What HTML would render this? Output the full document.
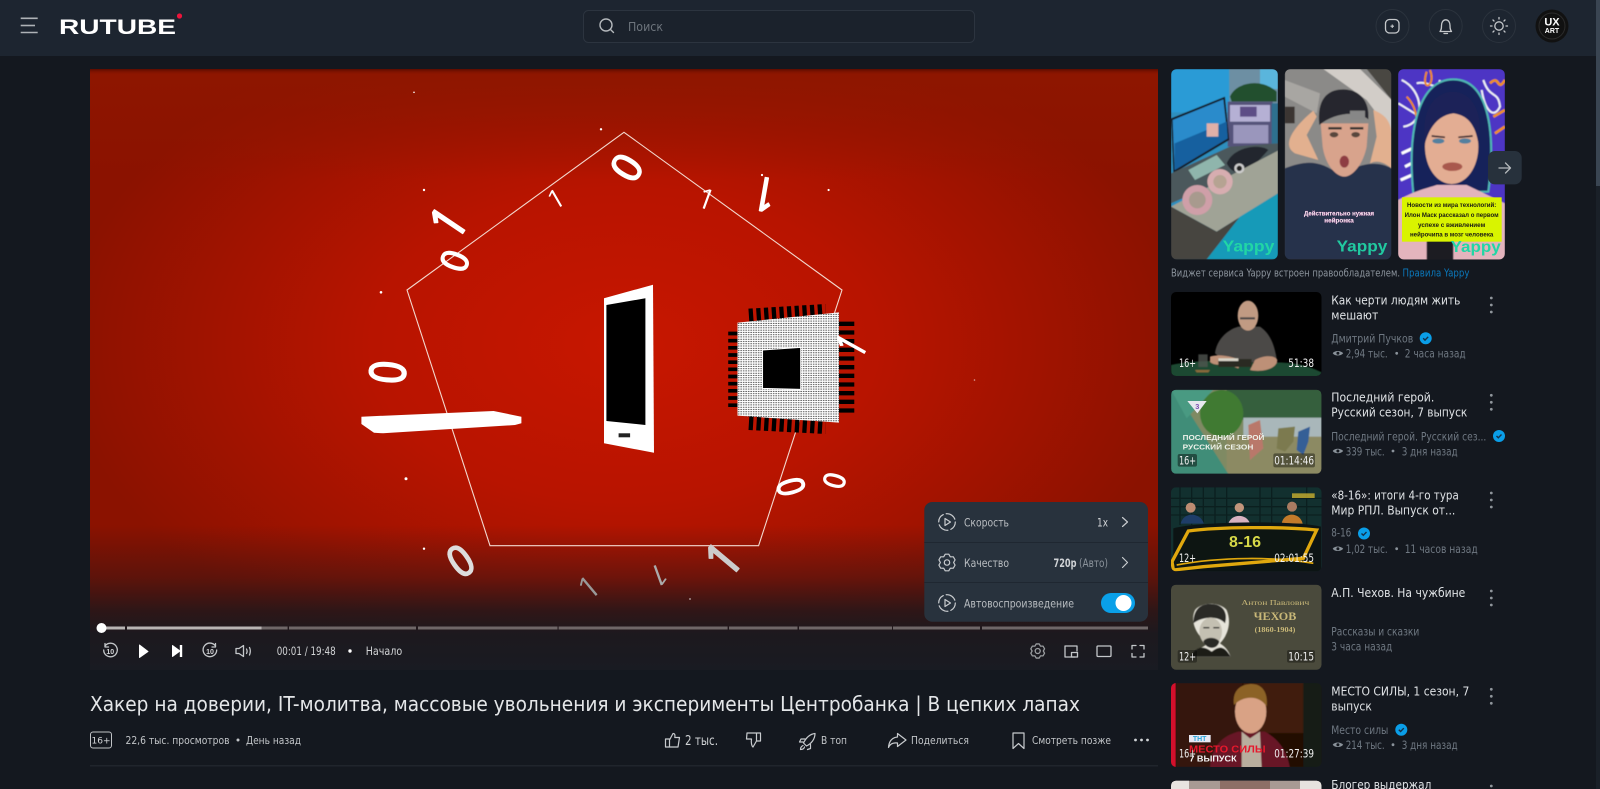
<!DOCTYPE html>
<html lang="ru"><head><meta charset="utf-8"><title>RUTUBE</title>
<style>
html,body{margin:0;padding:0;background:#14181f;width:1600px;height:789px;overflow:hidden}
svg.page{position:absolute;left:0;top:0;display:block}
text{font-family:"DejaVu Sans","Liberation Sans",sans-serif}
.img text,text.lib{font-family:"Liberation Sans","DejaVu Sans",sans-serif}
.img text.srf{font-family:"Liberation Serif",serif}
.ti{font-size:12.5px;fill:#dfe2e5}
.ch{font-size:11.500px;fill:#6f7882}
.lb{font-size:11.500px;fill:#f0f0f0}
.ic{fill:none;stroke:#c4c7ca;stroke-width:1.3;stroke-linecap:round;stroke-linejoin:round}
.ica{fill:none;stroke:#c8cbce;stroke-width:1.2;stroke-linecap:round;stroke-linejoin:round}
.wd text{font-family:"Noto Sans CJK JP","Liberation Sans",sans-serif;fill:#fff}
.wd .o{stroke:#fff;stroke-width:3;font-weight:400}
.wd text.n{font-family:"NanumGothic","WenQuanYi Zen Hei",sans-serif}
</style></head><body>
<svg class="page" width="1600" height="789" viewBox="0 0 1600 789" xmlns="http://www.w3.org/2000/svg">
<defs>
<radialGradient id="vg" gradientUnits="userSpaceOnUse" cx="624" cy="345" r="560" gradientTransform="translate(624 345) scale(1 .62) translate(-624 -345)">
<stop offset="0" stop-color="#c71600"/><stop offset=".45" stop-color="#b81400"/><stop offset="1" stop-color="#8b1200"/></radialGradient>
<linearGradient id="vb" x1="0" y1="0" x2="0" y2="1"><stop offset="0" stop-color="#19151a" stop-opacity="0"/><stop offset=".36" stop-color="#19151a" stop-opacity=".4"/><stop offset=".59" stop-color="#19171c" stop-opacity=".82"/><stop offset=".75" stop-color="#19191f" stop-opacity=".97"/><stop offset="1" stop-color="#191b22"/></linearGradient>
<linearGradient id="vt" x1="0" y1="0" x2="0" y2="1"><stop offset="0" stop-color="#5a0c00"/><stop offset="1" stop-color="#8c1500" stop-opacity="0"/></linearGradient>
<linearGradient id="vtop" x1="0" y1="0" x2="0" y2="1"><stop offset="0" stop-color="#8e1600"/><stop offset="1" stop-color="#8e1600" stop-opacity="0"/></linearGradient>
<pattern id="cpu" width="7" height="6.800" patternUnits="userSpaceOnUse"><rect x="1" y="2.500" width="4.500" height="2.200" fill="#222"/></pattern>
<clipPath id="c1"><rect x="1171" y="69" width="107" height="190.500" rx="6"/></clipPath>
<clipPath id="c2"><rect x="1284.700" y="69" width="106.600" height="190.500" rx="6"/></clipPath>
<clipPath id="c3"><rect x="1398" y="69" width="107" height="190.500" rx="6"/></clipPath>
<clipPath id="t1"><rect x="1171" y="292" width="150.500" height="84" rx="5"/></clipPath>
<clipPath id="t2"><rect x="1171" y="389.700" width="150.500" height="84" rx="5"/></clipPath>
<clipPath id="t3"><rect x="1171" y="487.300" width="150.500" height="84" rx="5"/></clipPath>
<clipPath id="t4"><rect x="1171" y="584.700" width="150.500" height="85" rx="5"/></clipPath>
<clipPath id="t5"><rect x="1171" y="683" width="150.500" height="84" rx="5"/></clipPath>
<clipPath id="t6"><rect x="1171" y="780.700" width="150.500" height="84" rx="5"/></clipPath>
<filter id="b1" x="-5%" y="-5%" width="110%" height="110%"><feGaussianBlur stdDeviation="1.500"/></filter>
<g id="eye"><path d="M0 3.500C2 .5 8 .5 10.500 3.500 8 6.500 2 6.500 0 3.500Z" fill="#8a929a"/><circle cx="5.200" cy="3.500" r="1.500" fill="#14181f"/></g>
<g id="chk"><circle r="6" fill="#0a9ee8"/><path d="M-2.500 0 -.7 1.800 2.500-1.500" fill="none" stroke="#14304a" stroke-width="1.400"/></g>
<g id="mn" fill="#8f959b"><circle cy="-7" r="1.400"/><circle r="1.400"/><circle cy="7" r="1.400"/></g>
<path id="gear" d="M-1.770 -8.310L1.770 -8.310 3.300 -5.720 6.320 -5.690 8.080 -2.630 6.600 0 8.080 2.630 6.320 5.690 3.300 5.720 1.770 8.310 -1.770 8.310 -3.300 5.720 -6.320 5.690 -8.080 2.630 -6.600 0 -8.080 -2.630 -6.320 -5.690 -3.300 -5.720Z"/>
</defs>

<rect width="1600" height="789" fill="#14181f"/>

<!-- header -->
<rect width="1596" height="56" fill="#1d2530"/>
<rect x="1596" width="4" height="789" fill="#1a2028"/>
<rect x="1596" width="4" height="186" fill="#3a4552"/>
<g stroke="#aeb2b6" stroke-width="1.600"><path d="M20.700 18.300H37.700"/><path d="M20.700 25.500H35"/><path d="M20.700 32.500H37.700"/></g>
<text class="lib" x="59" y="34" font-size="21" font-weight="700" fill="#fff" textLength="117" lengthAdjust="spacingAndGlyphs">RUTUBE</text>
<circle cx="179.500" cy="16" r="2.600" fill="#ed143b"/>
<rect x="583.500" y="10.500" width="391" height="32" rx="5" fill="#1b222c" stroke="#2c343f"/>
<circle cx="606" cy="25" r="6" fill="none" stroke="#b4b8bc" stroke-width="1.400"/><path d="M610.500 29.500 613.500 32.500" stroke="#b4b8bc" stroke-width="1.400" stroke-linecap="round"/>
<text x="628" y="31" font-size="12.500" fill="#6d747c" textLength="35" lengthAdjust="spacingAndGlyphs">Поиск</text>
<g fill="none" stroke="#2b333d"><circle cx="1392.500" cy="26" r="16.500"/><circle cx="1445.700" cy="26" r="16.500"/><circle cx="1499" cy="26" r="16.500"/></g>
<rect x="1385.500" y="19.500" width="13.500" height="13.500" rx="4" class="ic"/><path d="M1390.500 26.200H1394M1392.250 24.500V28" stroke="#c4c7ca" stroke-width="1.100"/>
<path class="ic" d="M1440 31.500H1451.500C1450 29.500 1450 28 1450 25.500 1450 22.500 1448.500 19.800 1445.700 19.800 1443 19.800 1441.500 22.500 1441.500 25.500 1441.500 28 1441.500 29.500 1440 31.500ZM1444 33.500H1447.500"/>
<circle cx="1499" cy="26" r="4.200" class="ic"/><path class="ic" d="M1499 17.500V19M1499 33V34.500M1490.500 26H1492M1506 26H1507.500M1493 20 1494 21M1504 31 1505 32M1505 20 1504 21M1494 31 1493 32"/>
<circle cx="1552" cy="26" r="16.500" fill="#111"/><circle cx="1552" cy="26" r="13" fill="none" stroke="#2b2b2b"/>
<text class="lib" x="1552" y="25.500" font-size="11" font-weight="700" fill="#fff" text-anchor="middle">UX</text>
<text class="lib" x="1552" y="33" font-size="7" font-weight="700" fill="#fff" text-anchor="middle">ART</text>

<!-- video -->
<rect x="90" y="69" width="1068" height="601" fill="url(#vg)"/>
<rect x="90" y="69" width="1068" height="110" fill="url(#vtop)"/>
<rect x="90" y="69" width="1068" height="6" fill="url(#vt)"/>
<rect x="90" y="525" width="1068" height="145" fill="url(#vb)"/>
<polygon points="624,132.300 842,290 758.600,545.700 490,545.700 407,290" fill="none" stroke="#f3d9cf" stroke-width="1.100"/>
<!-- phone -->
<polygon points="604,298.300 653,284.700 654,452.700 604,443.300" fill="#fff"/>
<polygon points="606.400,305 645.400,298.300 645.400,425 606.400,421" fill="#000"/>
<rect x="618.600" y="433.300" width="11.500" height="4" fill="#222"/>
<!-- tablet -->
<polygon points="361.400,416.700 493.600,411 521.400,416.700 521.400,423.300 515,425 383,433.300 374,432.700 361.400,424" fill="#fff"/>
<!-- chip -->
<g transform="translate(340 270) scale(.35714 .33333)">
<g fill="none" stroke="#000">
<path d="M1145 138 1360 124" stroke-width="44" stroke-dasharray="12 9.500"/>
<path d="M1145 458 1360 470" stroke-width="44" stroke-dasharray="12 9.500"/>
<path d="M1100 185V418" stroke-width="26" stroke-dasharray="11 10.500"/>
<path d="M1418 155V430" stroke-width="44" stroke-dasharray="13 13"/>
</g>
<polygon points="1113,158 1397,127 1397,458 1113,437" fill="#fff"/>
<polygon points="1113,158 1397,127 1397,458 1113,437" fill="url(#cpu)"/>
<polygon points="1183,240 1290,232 1290,358 1183,355" fill="#000" stroke="#fff" stroke-width="3"/>
</g>
<!-- digits -->
<g class="wd" font-size="100" text-anchor="middle">
<text class="o" y="35" transform="translate(627 167.700) rotate(-58) scale(.42 .42)">0</text>
<text class="n" y="35" transform="translate(556 199.300) rotate(-30) scale(.3 .25)">1</text>
<text class="n" y="35" transform="translate(706 199.300) rotate(20) scale(.32 .27)">1</text>
<text class="n" y="35" font-weight="700" transform="translate(765 193.300) rotate(190) scale(.42 .46)">1</text>
<text class="n" y="35" font-weight="700" transform="translate(449 223.300) rotate(-56) scale(.48 .5)">1</text>
<text class="o" y="35" transform="translate(455 261) rotate(-70) scale(.36 .38)">0</text>
<text class="o" y="35" transform="translate(388 372.300) rotate(-85) scale(.42 .5)">0</text>
<text class="n" y="35" font-weight="700" transform="translate(852 346) rotate(-61) scale(.32 .42)">1</text>
<text class="o" y="35" transform="translate(790.700 486.700) rotate(75) scale(.32 .38)">0</text>
<text class="o" y="35" transform="translate(834.600 480.700) rotate(-75) scale(.28 .3)">0</text>
<text class="o" y="35" transform="translate(460.700 561) rotate(-35) scale(.4 .44)" style="fill:#ddd;stroke:#ddd">0</text>
<text class="n" y="35" font-weight="700" transform="translate(724 560) rotate(-50) scale(.5 .5)" style="fill:#ccc">1</text>
<text class="n" y="35" transform="translate(589 587.700) rotate(-40) scale(.34 .3)" style="fill:#999">1</text>
<text class="n" y="35" transform="translate(659 574.300) rotate(160) scale(.34 .28)" style="fill:#aaa">1</text>
</g>
<g fill="#fff"><circle cx="414" cy="92.300" r=".8"/><circle cx="601" cy="129.300" r="1.200"/><circle cx="424" cy="190" r="1.200"/><circle cx="762" cy="175" r="1.100"/><circle cx="828.600" cy="190" r="1.100"/><circle cx="381" cy="292.300" r="1.300"/><circle cx="406" cy="478.700" r="1.500"/><circle cx="424" cy="548.700" r="1.200"/><circle cx="690" cy="599" r="1" opacity=".5"/><circle cx="974.500" cy="380" r=".8" opacity=".6"/></g>

<!-- progress -->
<g fill="#6f6768">
<rect x="261.600" y="626.500" width="26" height="3"/><rect x="289" y="626.500" width="127" height="3"/><rect x="418" y="626.500" width="139.500" height="3"/><rect x="558.600" y="626.500" width="169" height="3"/><rect x="729" y="626.500" width="68.500" height="3"/><rect x="799" y="626.500" width="93" height="3"/><rect x="893" y="626.500" width="87" height="3"/><rect x="982" y="626.500" width="166" height="3"/>
</g>
<rect x="102" y="626.500" width="23" height="3" fill="#b9b5b4"/><rect x="127" y="626.500" width="134.600" height="3" fill="#b9b5b4"/>
<circle cx="101.500" cy="628" r="5" fill="#fff"/>

<!-- controls -->
<path class="ic" d="M105 646A6.800 6.800 0 1 1 103.700 650"/><path d="M105 643.500V647H108.500" class="ic"/>
<text class="lib" x="110.300" y="654" font-size="7" font-weight="700" fill="#d4d6d8" text-anchor="middle">10</text>
<path d="M139.500 645 148 651.500 139.500 657.500Z" fill="#fff" stroke="#fff" stroke-linejoin="round"/>
<path d="M172.500 645.500 180 651 172.500 656.500Z" fill="#fff" stroke="#fff" stroke-linejoin="round"/><rect x="179.800" y="645" width="2.400" height="12" fill="#fff"/>
<path class="ic" d="M215.500 646A6.800 6.800 0 1 0 216.700 650"/><path d="M215.500 643.500V647H212" class="ic"/>
<text class="lib" x="210" y="654" font-size="7" font-weight="700" fill="#d4d6d8" text-anchor="middle">10</text>
<path class="ic" d="M236 648.500H239L243.500 645.500V656.500L239 653.500H236ZM246.500 649C247.300 650.500 247.300 652 246.500 653.500M249.500 647.500C250.500 649.500 250.500 652.500 249.500 655"/>
<text x="276.700" y="655" font-size="11.500" fill="#d2d4d6" textLength="59" lengthAdjust="spacingAndGlyphs">00:01 / 19:48</text>
<circle cx="350" cy="651" r="1.700" fill="#fff"/>
<text x="365.700" y="655" font-size="11.500" fill="#d2d4d6" textLength="36.500" lengthAdjust="spacingAndGlyphs">Начало</text>
<use href="#gear" x="0" y="0" transform="translate(1037.700 651) scale(.85)" fill="none" stroke="#9a9da0" stroke-width="1.500" stroke-linejoin="round"/><circle cx="1037.700" cy="651" r="2.500" fill="none" stroke="#9a9da0" stroke-width="1.300"/>
<path class="ic" d="M1075 657H1065V646H1077V651"/><rect x="1071.500" y="652.500" width="6" height="4.500" class="ic"/>
<rect x="1097" y="646" width="14" height="10.500" rx="1" class="ic"/>
<path class="ic" d="M1132 649V645.500H1136M1140 645.500H1144V649M1144 653.500V657H1140M1136 657H1132V653.500"/>

<!-- settings panel -->
<rect x="924.300" y="502" width="223.700" height="119.700" rx="8" fill="#28323d"/>
<path d="M924.300 542.500H1148M924.300 582.500H1148" stroke="#1f2731"/>
<g class="ica"><circle cx="947" cy="522" r="8.300" stroke-dasharray="9 3 11 3"/><path d="M945 518.500 950.500 522 945 525.500Z"/>
<circle cx="947" cy="603" r="8.300" stroke-dasharray="9 3 11 3"/><path d="M945 599.500 950.500 603 945 606.500Z"/>
<use href="#gear" x="947" y="562.500"/><circle cx="947" cy="562.500" r="2.700"/>
<path d="M1122.500 517.500 1127.500 522 1122.500 526.500M1122.500 557.500 1127.500 562.500 1122.500 567.500"/></g>
<g font-size="11.500" fill="#b9bdc1">
<text x="964" y="526.300" textLength="45" lengthAdjust="spacingAndGlyphs">Скорость</text>
<text x="964" y="567" textLength="45" lengthAdjust="spacingAndGlyphs">Качество</text>
<text x="964" y="607.300" textLength="110" lengthAdjust="spacingAndGlyphs">Автовоспроизведение</text>
<text x="1097" y="526.300" textLength="11" lengthAdjust="spacingAndGlyphs" fill="#d0d3d6">1x</text>
<text x="1053.500" y="567" textLength="23" lengthAdjust="spacingAndGlyphs" fill="#d0d3d6" font-weight="700">720p</text>
<text x="1079" y="567" textLength="29" lengthAdjust="spacingAndGlyphs" fill="#8b939b">(Авто)</text>
</g>
<rect x="1101" y="593" width="34" height="20" rx="10" fill="#0aa0e8"/><circle cx="1123.500" cy="603" r="8" fill="#fff"/>

<!-- title and meta -->
<text x="90" y="711" font-size="20" fill="#e4e6e8" textLength="990" lengthAdjust="spacingAndGlyphs">Хакер на доверии, IT-молитва, массовые увольнения и эксперименты Центробанка | В цепких лапах</text>
<rect x="90.500" y="732" width="21" height="16" rx="2.500" fill="none" stroke="#c0c3c6"/>
<text x="101" y="743.500" font-size="9" fill="#d6d8da" text-anchor="middle">16+</text>
<g font-size="11" fill="#c2c5c8">
<text x="125.500" y="744" textLength="104" lengthAdjust="spacingAndGlyphs">22,6 тыс. просмотров</text>
<text x="246" y="744" textLength="55" lengthAdjust="spacingAndGlyphs">День назад</text>
<text x="821" y="744" textLength="26" lengthAdjust="spacingAndGlyphs">В топ</text>
<text x="911" y="744" textLength="58" lengthAdjust="spacingAndGlyphs">Поделиться</text>
<text x="1032" y="744" textLength="79" lengthAdjust="spacingAndGlyphs">Смотреть позже</text>
</g>
<circle cx="238" cy="740" r="1.500" fill="#c2c5c8"/>
<text x="685" y="745" font-size="13.500" fill="#cfd2d4" textLength="33" lengthAdjust="spacingAndGlyphs">2 тыс.</text>
<path class="ica" d="M665.500 739H669.500V747H665.500ZM669.500 740 673 733.500C675 733.500 675.200 735 674.800 737.500H679.500L678 747H669.500"/>
<path class="ica" d="M760.500 741H756.500V733H760.500ZM756.500 733H747L746.500 739H751.500C751 742 751.500 746 753 747L756.500 741"/>
<path class="ica" d="M815 733.500C810 734 806 738 803.500 743L806.500 746C811.500 743.500 815 739 815 733.500ZM805 739H801L799.500 742H803M810.500 744.500V748.500L807.500 749.500M803 745.500C801 746.500 800.500 748.500 800.500 749.500 802 749.500 804 749 804.500 747"/>
<path class="ica" d="M897.500 733.500 906 740 897.500 746.500V743C893 742.500 890 744 888.500 747.500 889 741.500 892 737.500 897.500 737Z"/>
<path class="ica" d="M1013 733H1024V748.500L1018.500 743.500 1013 748.500Z"/>
<g fill="#d0d3d6"><circle cx="1135.500" cy="740" r="1.400"/><circle cx="1141.500" cy="740" r="1.400"/><circle cx="1147.500" cy="740" r="1.400"/></g>
<rect x="90" y="765" width="1068" height="1.500" fill="#20252c"/>

<g class="img">
<!-- Yappy card 1 -->
<g clip-path="url(#c1)"><g transform="translate(1160 60) scale(.33333)">
<g filter="url(#b1)">
<rect x="33" y="27" width="321" height="571" fill="#2f8fbe"/>
<rect x="33" y="27" width="175" height="130" fill="#2c9bd6"/>
<rect x="208" y="27" width="146" height="120" fill="#6d8fa3"/>
<rect x="300" y="27" width="54" height="60" fill="#5ab5dc"/>
<path d="M210 110C225 70 300 50 350 95L350 125 215 125Z" fill="#24502f"/>
<rect x="203" y="125" width="135" height="135" fill="#55537a"/><rect x="210" y="135" width="120" height="50" fill="#b5b0d4"/><rect x="220" y="195" width="105" height="55" fill="#9a96bc"/><rect x="240" y="140" width="50" height="30" fill="#5d4e86"/>
<rect x="335" y="130" width="19" height="300" fill="#2f6f8f"/>
<polygon points="33,175 195,110 208,240 40,340" fill="#131a25"/><polygon points="38,180 190,118 203,235 44,330" fill="#2a8bcb"/><polygon points="44,250 200,185 203,235 44,330" fill="#17609f"/><rect x="140" y="190" width="35" height="40" fill="#e0b0a8"/>
<polygon points="33,340 210,260 354,250 354,290 33,430" fill="#4c595c"/>
<polygon points="85,330 170,285 195,315 105,360" fill="#8fb5ac"/>
<path d="M200 310C220 260 300 250 325 270L270 330C240 345 215 340 200 310Z" fill="#23272d"/>
<polygon points="33,440 354,272 354,400 170,515" fill="#a0a396"/>
<polygon points="33,440 170,515 354,400 354,440 140,598 33,598" fill="#47453f"/>
<polygon points="240,470 354,400 354,598 140,598" fill="#189ab8"/>
<circle cx="112" cy="420" r="45" fill="#cf9fa8"/><circle cx="112" cy="420" r="25" fill="#a89a8e"/><circle cx="180" cy="365" r="38" fill="#d7adb0"/><circle cx="180" cy="365" r="20" fill="#b6a392"/>
<circle cx="238" cy="325" r="15" fill="#ccc"/><circle cx="238" cy="325" r="8" fill="#222"/>
</g>
<text x="188" y="575" font-size="46" font-weight="700" style="fill:#21d6a5" textLength="155" lengthAdjust="spacingAndGlyphs">Yappy</text>
</g></g>
<!-- Yappy card 2 -->
<g clip-path="url(#c2)"><g transform="translate(1160 60) scale(.33333)">
<g filter="url(#b1)">
<rect x="374" y="27" width="321" height="571" fill="#8b8a88"/>
<polygon points="490,27 600,27 695,120 695,220 620,120" fill="#d2cdc8"/>
<polygon points="620,27 695,27 695,120" fill="#4a4642"/>
<polygon points="374,60 480,100 470,160 374,110" fill="#a8a6a2"/>
<rect x="374" y="140" width="30" height="50" fill="#3a3532"/>
<path d="M374 325 C440 300 480 300 540 345 C600 310 650 300 695 325V598H374Z" fill="#25304c"/>
<path d="M405 280 C370 260 385 215 460 152 L470 170 440 225 475 300Z" fill="#e2b08f"/>
<path d="M640 150 C680 165 695 190 695 230V325C670 305 650 300 630 310L650 230Z" fill="#e2b08f"/>
<path d="M482 190H625L620 260C610 310 580 350 553 350 525 350 495 310 488 260Z" fill="#d8a38c"/>
<path d="M478 195C470 120 500 88 550 88 600 88 630 125 625 178 590 150 520 160 478 195Z" fill="#26282e"/>
<rect x="570" y="152" width="45" height="28" fill="#878787"/>
<ellipse cx="522" cy="224" rx="13" ry="8" fill="#59463e"/><ellipse cx="587" cy="224" rx="13" ry="8" fill="#59463e"/>
<path d="M505 205H545M570 205H610" stroke="#33302f" stroke-width="7"/>
<ellipse cx="553" cy="305" rx="14" ry="18" fill="#8e3c43"/>
</g>
<text x="537" y="466" font-size="19" font-weight="700" text-anchor="middle" style="fill:#f3e6ef;stroke:#cb4da0;stroke-width:.8;paint-order:stroke" textLength="210" lengthAdjust="spacingAndGlyphs">Действительно нужная</text>
<text x="537" y="487" font-size="19" font-weight="700" text-anchor="middle" style="fill:#f3e6ef;stroke:#cb4da0;stroke-width:.8;paint-order:stroke">нейронка</text>
<text x="530" y="575" font-size="46" font-weight="700" style="fill:#21c9a0" textLength="152" lengthAdjust="spacingAndGlyphs">Yappy</text>
</g></g>
<!-- Yappy card 3 -->
<g clip-path="url(#c3)"><g transform="translate(1160 60) scale(.33333)">
<g filter="url(#b1)">
<rect x="714" y="27" width="321" height="571" fill="#4d34c4"/>
<g fill="none" stroke-width="6"><path d="M725 60C790 90 800 190 730 200M770 70C810 60 830 100 840 60M715 130 780 170" stroke="#f0f0f5"/>
<path d="M740 110C780 150 760 190 790 210M800 35C780 100 830 80 810 30" stroke="#ee8a1c"/>
<path d="M970 60C990 120 1015 90 1020 140 1000 180 975 150 965 90" stroke="#f0f0f5"/>
<path d="M1000 170 1035 150M1005 220 1035 200M990 70C1020 40 1010 100 1035 60" stroke="#f09020" stroke-width="8"/>
<path d="M725 280 790 250M735 320 775 300M722 360 790 330" stroke="#fff" stroke-width="9"/></g>
<path d="M760 400C740 200 780 58 880 58 980 58 1010 200 985 395Z" fill="#17245a" stroke="#4fb7b4" stroke-width="6"/>
<path d="M714 600V420C770 390 800 385 830 375L920 375 1035 430V600Z" fill="#e3b4bd"/>
<ellipse cx="875" cy="260" rx="80" ry="112" fill="#e3ad93"/>
<path d="M795 250C780 140 830 95 880 95 930 95 975 150 955 250 945 190 920 165 880 160 840 165 810 195 795 250Z" fill="#1a2358"/>
<ellipse cx="835" cy="243" rx="18" ry="8" fill="#52809f"/><ellipse cx="915" cy="243" rx="18" ry="8" fill="#52809f"/>
<path d="M815 228 855 232M895 232 938 228" stroke="#3c2a30" stroke-width="5"/>
<ellipse cx="877" cy="320" rx="30" ry="13" fill="#a9584e"/>
<rect x="800" y="530" width="80" height="70" fill="#1c1b22"/>
</g>
<rect x="726" y="412" width="299" height="133" fill="#d9f400"/>
<g font-size="18" font-weight="700" fill="#1a1a14" text-anchor="middle">
<text x="875" y="441" textLength="268" lengthAdjust="spacingAndGlyphs">Новости из мира технологий:</text>
<text x="875" y="471" textLength="282" lengthAdjust="spacingAndGlyphs">Илон Маск рассказал о первом</text>
<text x="875" y="501" textLength="202" lengthAdjust="spacingAndGlyphs">успехе с вживлением</text>
<text x="875" y="530" textLength="250" lengthAdjust="spacingAndGlyphs">нейрочипа в мозг человека</text></g>
<text x="872" y="576" font-size="46" font-weight="700" style="fill:#21d6a5" textLength="150" lengthAdjust="spacingAndGlyphs">Yappy</text>
</g></g>
<!-- Thumb 1 -->
<g clip-path="url(#t1)"><rect x="1171" y="292" width="151" height="84" fill="#000"/>
<g transform="translate(1160 285) scale(.33333)" filter="url(#b1)">
<path d="M33 240C100 225 200 225 300 235 400 225 450 245 485 262V275H33Z" fill="#1c4a30"/>
<path d="M165 205C170 165 200 135 235 125H300C330 145 345 180 352 235 320 230 200 240 165 205Z" fill="#4b4a47"/>
<ellipse cx="264" cy="92" rx="31" ry="45" fill="#c19b83"/>
<rect x="240" y="97" width="45" height="6" fill="#444"/>
<path d="M150 215C170 205 230 215 245 230L235 250C195 235 160 245 150 230Z" fill="#bd9077"/>
<path d="M285 225C310 210 345 210 352 225 350 255 300 262 270 255Z" fill="#bd9077"/>
<rect x="175" y="222" width="100" height="24" fill="#2c2a24"/><rect x="175" y="220" width="60" height="8" fill="#d8d4c8"/>
<rect x="115" y="208" width="28" height="38" fill="#50544f" opacity=".8"/>
<path d="M105 255H150L145 262H110Z" fill="#8a6b3a"/>
</g></g>
<!-- Thumb 2 -->
<g clip-path="url(#t2)"><g transform="translate(1160 285) scale(.33333)">
<g filter="url(#b1)">
<rect x="33" y="314" width="452" height="253" fill="#7f8a63"/>
<rect x="200" y="314" width="285" height="90" fill="#345e3d"/>
<rect x="250" y="398" width="235" height="60" fill="#a9b7ba"/>
<rect x="200" y="455" width="285" height="112" fill="#8c8a63"/>
<ellipse cx="185" cy="385" rx="65" ry="70" fill="#3f7a33"/>
<polygon points="33,314 33,567 205,567 80,370" fill="#3f8d78"/>
<polygon points="33,314 160,314 80,400" fill="#4a9a82"/>
<path d="M265 420 300 405 310 490 270 525Z" fill="#b9786a"/><path d="M355 430 405 425 400 470 375 500 350 490Z" fill="#7b7a4f"/><path d="M415 440 450 425 445 470 430 510 410 495Z" fill="#355f96"/>
</g>
<polygon points="82,348 140,348 112,385" fill="#e8e8ee"/>
<text x="112" y="372" font-size="22" font-weight="700" fill="#7c4fb0" text-anchor="middle">3</text>
<text x="68" y="465" font-size="22" font-weight="700" style="fill:#eef2ea" textLength="245" lengthAdjust="spacingAndGlyphs">ПОСЛЕДНИЙ ГЕРОЙ</text>
<text x="68" y="493" font-size="22" font-weight="700" style="fill:#eef2ea" textLength="212" lengthAdjust="spacingAndGlyphs">РУССКИЙ СЕЗОН</text>
<rect x="53" y="507" width="58" height="38" rx="6" fill="#000" opacity=".45"/><rect x="340" y="505" width="125" height="42" rx="6" fill="#000" opacity=".4"/>
</g></g>
<!-- Thumb 3 -->
<g clip-path="url(#t3)"><g transform="translate(1160 285) scale(.33333)">
<rect x="33" y="607" width="452" height="252" fill="#12302f"/>
<g stroke="#0a1c1c" stroke-width="4" opacity=".8"><path d="M33 640H485M33 665H485M33 690H485M60 607V720M95 607V720M130 607V720M165 607V720M200 607V720M300 607V720M335 607V720M440 607V720"/></g>
<rect x="396" y="625" width="68" height="14" fill="#c9b02e" opacity=".8"/>
<path d="M62 716C70 680 120 680 132 716Z" fill="#1e3d68"/><circle cx="92" cy="668" r="15" fill="#bd8c72"/>
<path d="M205 716C215 685 260 685 270 716Z" fill="#d8b2c0"/><circle cx="238" cy="668" r="14" fill="#c2957c"/>
<path d="M365 716C370 680 420 680 428 716Z" fill="#c27a2a"/><circle cx="396" cy="665" r="15" fill="#a97b61"/>
<path d="M40 730C110 710 400 705 483 725V860H40Z" fill="#0c1414"/>
<path d="M85 738C180 725 360 725 470 735L430 820 130 845 40 855 36 830Z" fill="#0d1512" stroke="#e0a80e" stroke-width="10"/>
<text x="255" y="786" font-size="48" font-weight="700" text-anchor="middle" style="fill:#d7d948">8-16</text>
<path d="M50 840C180 815 350 815 460 835" stroke="#e0a80e" stroke-width="5" fill="none"/>
</g></g>
<!-- Thumb 4 -->
<g clip-path="url(#t4)"><g transform="translate(1160 535) scale(.33333)">
<rect x="33" y="149" width="452" height="256" fill="#4a4a3c"/>
<g filter="url(#b1)">
<path d="M95 365C110 345 130 335 145 325 105 300 90 255 105 225 125 200 180 200 200 225 215 260 205 300 180 325 195 335 205 345 212 365Z" fill="#e6e4da"/>
<path d="M100 265C100 215 130 205 155 207 190 207 205 235 195 265 175 240 125 245 100 265Z" fill="#2a2a26"/>
<ellipse cx="152" cy="290" rx="34" ry="42" fill="#c4c0b2"/>
<path d="M130 320C135 305 170 305 178 320 172 345 140 345 130 320Z" fill="#2b2a27"/>
<path d="M130 278H148M160 278H178" stroke="#222" stroke-width="4"/>
<path d="M92 365C110 335 130 330 155 350 180 330 195 335 212 365Z" fill="#1a1a18"/>
</g>
<g text-anchor="middle" fill="#c9b878">
<text class="srf" x="346" y="210" font-size="21" textLength="204" lengthAdjust="spacingAndGlyphs">Антон Павлович</text>
<text class="srf" x="345" y="255" font-size="36" font-weight="700" textLength="128" lengthAdjust="spacingAndGlyphs">ЧЕХОВ</text>
<text class="srf" x="345" y="291" font-size="21" font-weight="700" textLength="122" lengthAdjust="spacingAndGlyphs">(1860-1904)</text></g>
<rect x="53" y="345" width="58" height="38" rx="6" fill="#000" opacity=".35"/><rect x="381" y="345" width="84" height="38" rx="6" fill="#000" opacity=".35"/>
</g></g>
<!-- Thumb 5 -->
<g clip-path="url(#t5)"><g transform="translate(1160 535) scale(.33333)">
<g filter="url(#b1)">
<rect x="33" y="444" width="452" height="252" fill="#200805"/>
<rect x="48" y="444" width="200" height="252" fill="#341208"/>
<rect x="250" y="444" width="180" height="150" fill="#3f1a0a"/>
<rect x="430" y="444" width="55" height="252" fill="#131a14"/>
<path d="M150 700C155 620 200 600 235 590H315C350 610 380 640 390 700Z" fill="#671828"/>
<path d="M245 590 270 610 300 590 305 700H245Z" fill="#b9ae9e"/>
<ellipse cx="272" cy="530" rx="47" ry="65" fill="#d9a285"/>
<path d="M222 510C215 460 250 447 275 447 305 447 325 470 320 515 300 480 250 480 222 510Z" fill="#8c6227"/>
</g>
<rect x="33" y="444" width="14" height="252" fill="#d3102c"/>
<rect x="87" y="600" width="65" height="22" fill="#e8e8f2"/><text x="119" y="618" font-size="21" font-weight="700" fill="#2aa6dc" text-anchor="middle">ТНТ</text>
<text x="87" y="653" font-size="31" font-weight="700" style="fill:#e6182c" textLength="230" lengthAdjust="spacingAndGlyphs">МЕСТО СИЛЫ</text>
<text x="88" y="679" font-size="24" font-weight="700" style="fill:#f4f4f4" textLength="142" lengthAdjust="spacingAndGlyphs">7 ВЫПУСК</text>
</g></g>
<!-- Thumb 6 -->
<g clip-path="url(#t6)"><rect x="1171" y="780" width="151" height="12" fill="#a89a94"/><rect x="1171" y="780" width="18" height="12" fill="#e8e4e0"/><rect x="1300" y="780" width="22" height="12" fill="#e6e2de"/><rect x="1220" y="780" width="50" height="12" fill="#8d6f66"/></g>
</g>

<text x="1171" y="276.500" font-size="10.500" fill="#8c949d" textLength="229" lengthAdjust="spacingAndGlyphs">Виджет сервиса Yappy встроен правообладателем.</text>
<text x="1402.500" y="276.500" font-size="10.500" fill="#0b78bb" textLength="67" lengthAdjust="spacingAndGlyphs">Правила Yappy</text>
<rect x="1488" y="151" width="33.700" height="33.400" rx="7" fill="#27313c"/>
<path d="M1499 168H1510.500M1505.500 163 1510.500 168 1505.500 173" fill="none" stroke="#b4b8bc" stroke-width="1.300" stroke-linecap="round" stroke-linejoin="round"/>

<!-- thumb labels -->
<g class="lb">
<text x="1179" y="367" textLength="17" lengthAdjust="spacingAndGlyphs">16+</text><text x="1288.300" y="367" textLength="25.700" lengthAdjust="spacingAndGlyphs">51:38</text>
<text x="1179" y="464.500" textLength="17" lengthAdjust="spacingAndGlyphs">16+</text><text x="1274.300" y="464.500" textLength="39.700" lengthAdjust="spacingAndGlyphs">01:14:46</text>
<text x="1179" y="562" textLength="17" lengthAdjust="spacingAndGlyphs">12+</text><text x="1274.300" y="562" textLength="39.700" lengthAdjust="spacingAndGlyphs">02:01:55</text>
<text x="1179" y="660.500" textLength="17" lengthAdjust="spacingAndGlyphs">12+</text><text x="1288.300" y="660.500" textLength="25.700" lengthAdjust="spacingAndGlyphs">10:15</text>
<text x="1179" y="757.500" textLength="17" lengthAdjust="spacingAndGlyphs">16+</text><text x="1274.300" y="757.500" textLength="39.700" lengthAdjust="spacingAndGlyphs">01:27:39</text>
</g>

<!-- list text -->
<g class="ti">
<text x="1331.300" y="304.300" textLength="129" lengthAdjust="spacingAndGlyphs">Как черти людям жить</text>
<text x="1331.300" y="319.300" textLength="47" lengthAdjust="spacingAndGlyphs">мешают</text>
<text x="1331.300" y="401.600" textLength="103" lengthAdjust="spacingAndGlyphs">Последний герой.</text>
<text x="1331.300" y="416.600" textLength="136" lengthAdjust="spacingAndGlyphs">Русский сезон, 7 выпуск</text>
<text x="1331.300" y="499.600" textLength="127.500" lengthAdjust="spacingAndGlyphs">«8-16»: итоги 4-го тура</text>
<text x="1331.300" y="514.600" textLength="124" lengthAdjust="spacingAndGlyphs">Мир РПЛ. Выпуск от...</text>
<text x="1331.300" y="596.900" textLength="134" lengthAdjust="spacingAndGlyphs">А.П. Чехов. На чужбине</text>
<text x="1331.300" y="695.300" textLength="138" lengthAdjust="spacingAndGlyphs">МЕСТО СИЛЫ, 1 сезон, 7</text>
<text x="1331.300" y="710.300" textLength="40.500" lengthAdjust="spacingAndGlyphs">выпуск</text>
<text x="1331.300" y="789" textLength="100" lengthAdjust="spacingAndGlyphs">Блогер выдержал</text>
</g>
<g class="ch">
<text x="1331.300" y="342.600" textLength="82" lengthAdjust="spacingAndGlyphs">Дмитрий Пучков</text>
<text x="1345.700" y="357.600" textLength="42" lengthAdjust="spacingAndGlyphs">2,94 тыс.</text><text x="1404.700" y="357.600" textLength="61" lengthAdjust="spacingAndGlyphs">2 часа назад</text>
<text x="1331.300" y="440.300" textLength="155" lengthAdjust="spacingAndGlyphs">Последний герой. Русский сез...</text>
<text x="1345.700" y="455.300" textLength="39" lengthAdjust="spacingAndGlyphs">339 тыс.</text><text x="1401.700" y="455.300" textLength="56" lengthAdjust="spacingAndGlyphs">3 дня назад</text>
<text x="1331.300" y="536.600" textLength="20" lengthAdjust="spacingAndGlyphs">8-16</text>
<text x="1345.700" y="553" textLength="42" lengthAdjust="spacingAndGlyphs">1,02 тыс.</text><text x="1404.700" y="553" textLength="73" lengthAdjust="spacingAndGlyphs">11 часов назад</text>
<text x="1331.300" y="635.600" textLength="88" lengthAdjust="spacingAndGlyphs">Рассказы и сказки</text>
<text x="1331.300" y="650.600" textLength="61" lengthAdjust="spacingAndGlyphs">3 часа назад</text>
<text x="1331.300" y="734" textLength="57" lengthAdjust="spacingAndGlyphs">Место силы</text>
<text x="1345.700" y="749" textLength="39" lengthAdjust="spacingAndGlyphs">214 тыс.</text><text x="1401.700" y="749" textLength="56" lengthAdjust="spacingAndGlyphs">3 дня назад</text>
</g>
<use href="#eye" x="1332.700" y="349.800"/><use href="#eye" x="1332.700" y="447.500"/><use href="#eye" x="1332.700" y="545.200"/><use href="#eye" x="1332.700" y="741.200"/>
<g fill="#8a929a"><circle cx="1396.700" cy="353.300" r="1.400"/><circle cx="1393" cy="451" r="1.400"/><circle cx="1396.700" cy="548.700" r="1.400"/><circle cx="1393" cy="744.700" r="1.400"/></g>
<use href="#chk" x="1425.700" y="338.300"/><use href="#chk" x="1499" y="436"/><use href="#chk" x="1364" y="533.500"/><use href="#chk" x="1401.300" y="729.700"/>
<use href="#mn" x="1491.300" y="305"/><use href="#mn" x="1491.300" y="402.300"/><use href="#mn" x="1491.300" y="500"/><use href="#mn" x="1491.300" y="598"/><use href="#mn" x="1491.300" y="696.300"/><use href="#mn" x="1491.300" y="793"/>
</svg>
</body></html>
